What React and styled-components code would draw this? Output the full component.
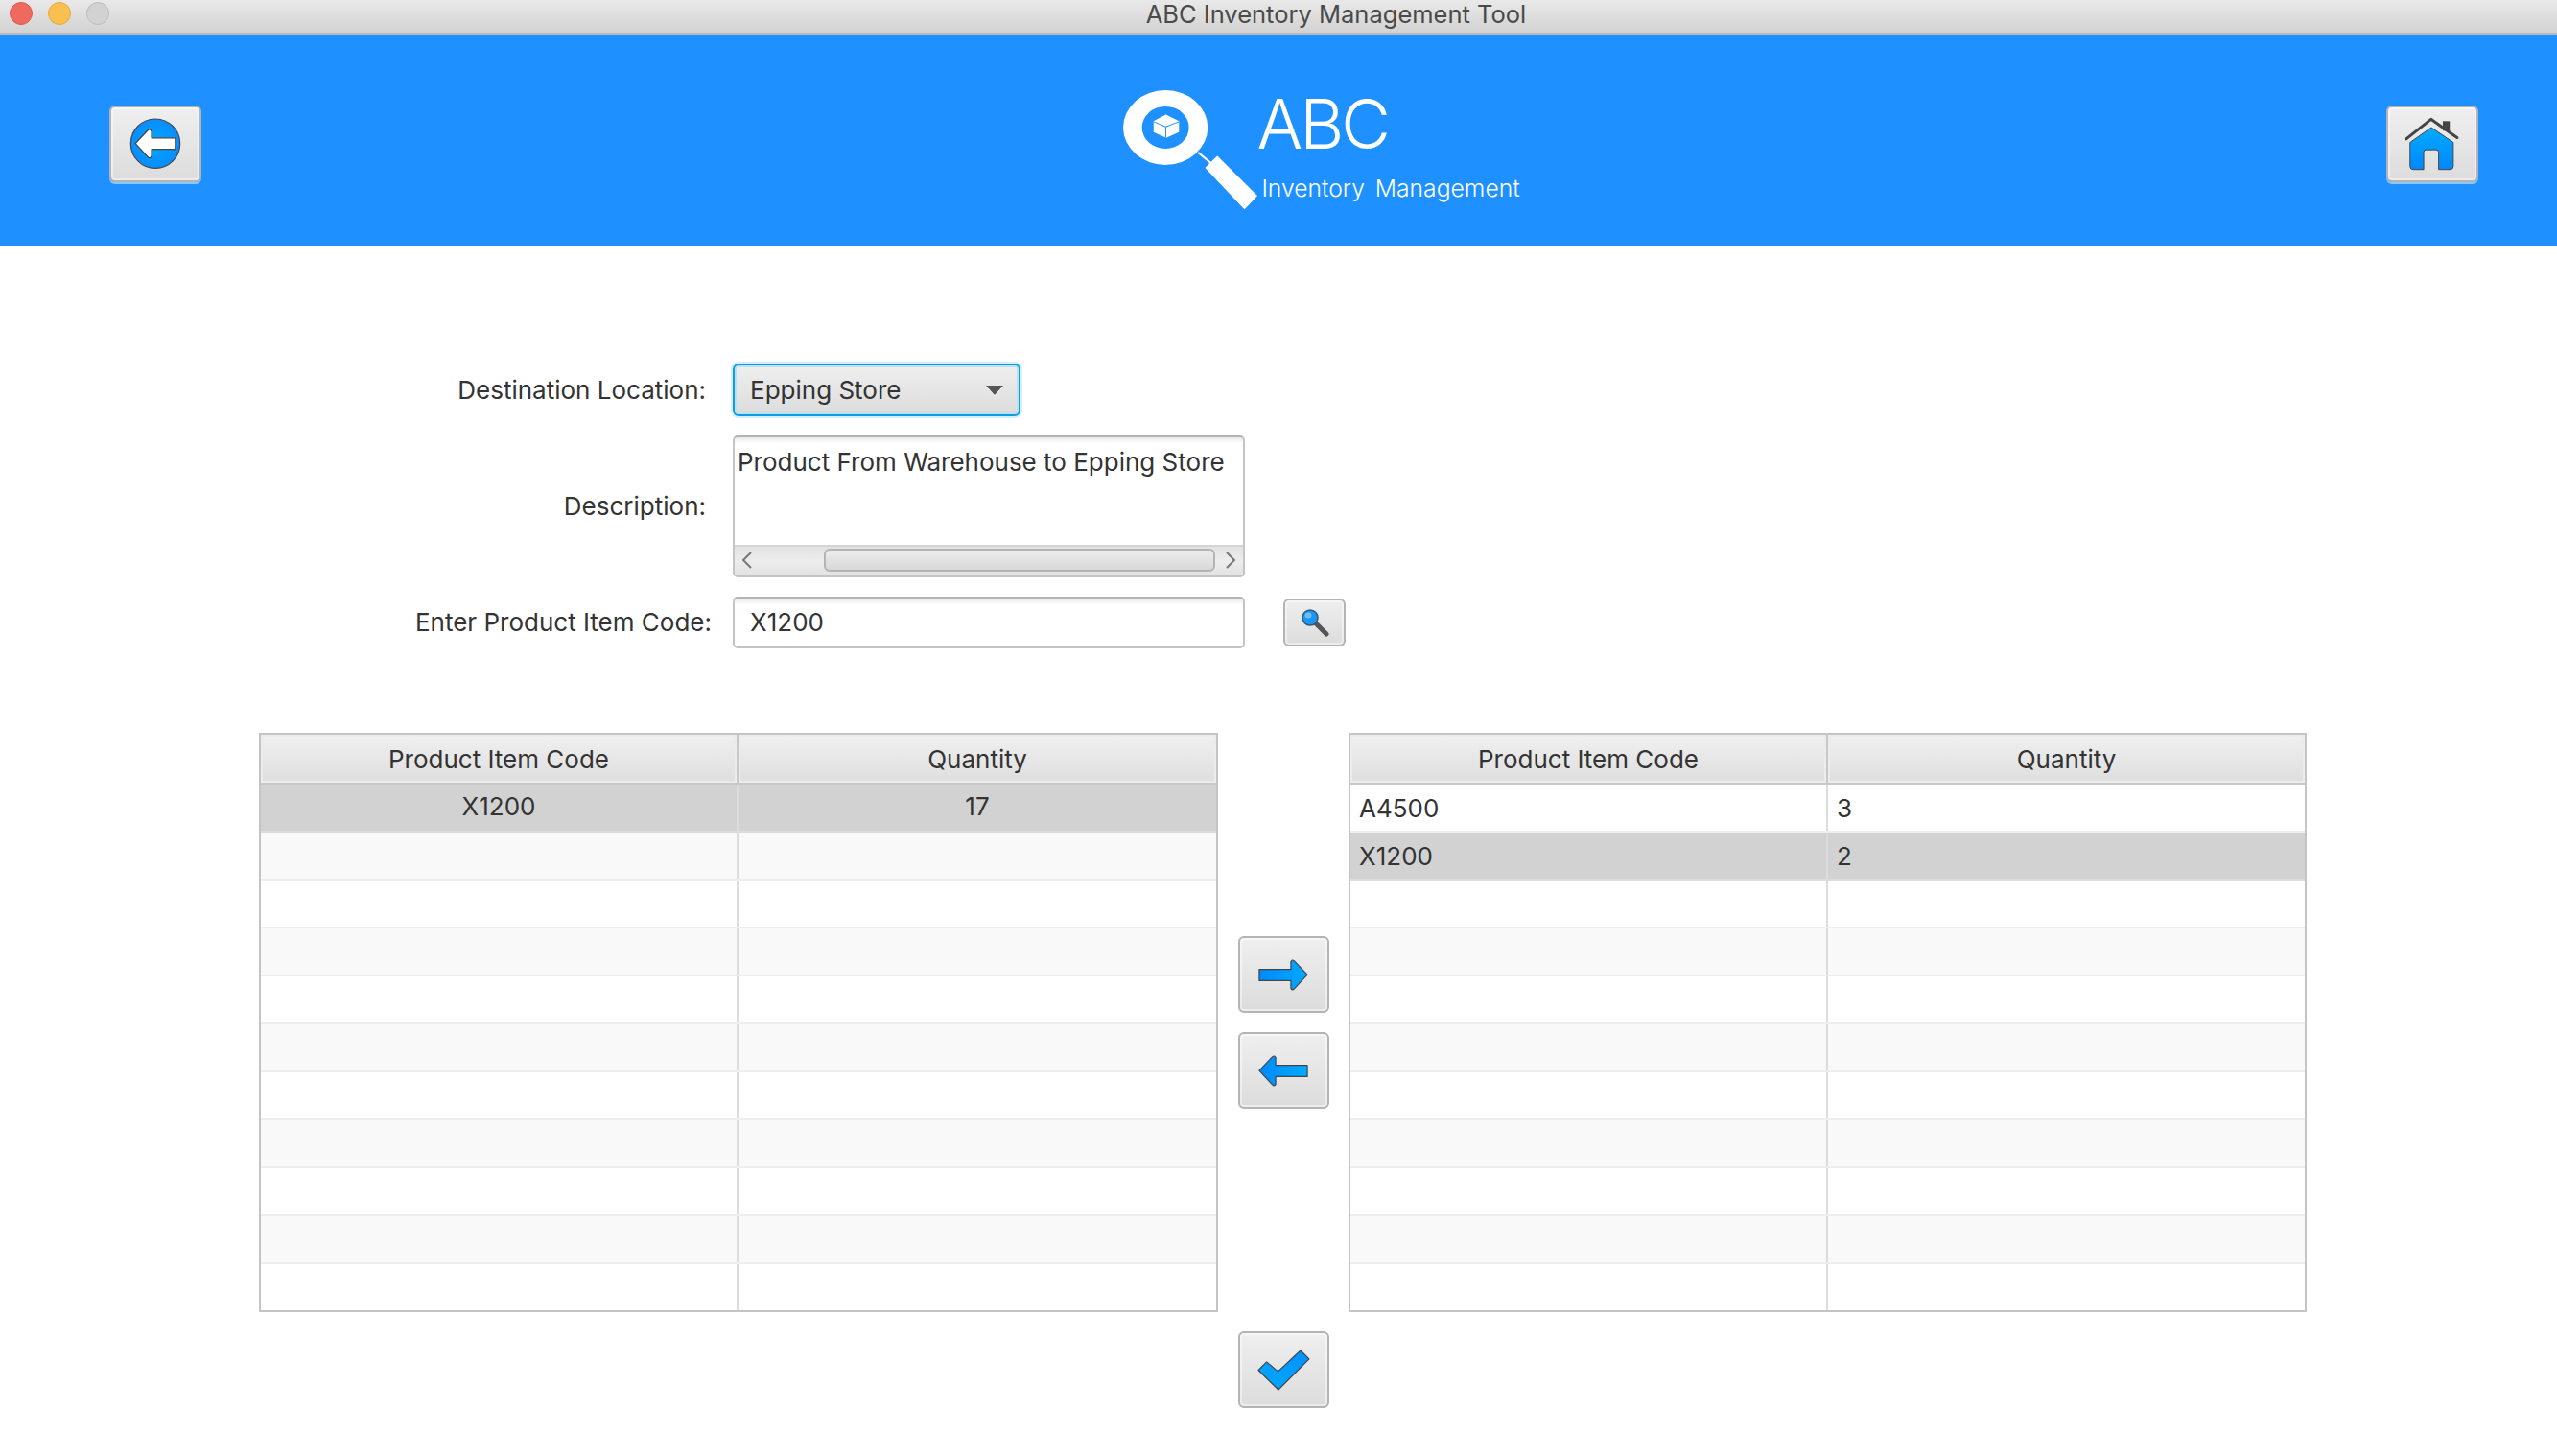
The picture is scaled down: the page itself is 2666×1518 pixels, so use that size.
import React from "react";
import styled, { createGlobalStyle } from "styled-components";

const FONT = `Inter, "Liberation Sans", sans-serif`;

const Global = createGlobalStyle`
  html, body { margin: 0; padding: 0; background: #fff; }
  body { font-family: ${FONT}; color: #333; }
  * { box-sizing: border-box; }
`;

const Page = styled.div`
  width: 2666px;
  height: 1518px;
  overflow: hidden;
  display: flex;
  flex-direction: column;
  background: #fff;
`;

const TitleBar = styled.div`
  position: relative;
  height: 36px;
  flex: none;
  display: flex;
  align-items: center;
  justify-content: center;
  padding: 0 0 4px 120px;
  background: linear-gradient(#e9e9e9, #d2d2d2);
  border-bottom: 2px solid #b9b9b9;
  font-size: 25.5px;
  line-height: 30px;
  color: #4a4a4a;
`;

const Lights = styled.div`
  position: absolute;
  left: 10px;
  top: 2px;
  display: flex;
  gap: 16px;
`;

const Light = styled.span`
  width: 24px;
  height: 24px;
  border-radius: 50%;
  background: ${(p) => p.$fill};
  border: 1px solid ${(p) => p.$edge};
`;

const Header = styled.header`
  height: 220px;
  flex: none;
  display: flex;
  justify-content: space-between;
  align-items: flex-start;
  padding: 74px 82px 0 114px;
  background: #1e90ff;
`;

const Button = styled.button`
  width: ${(p) => p.$w || 95}px;
  height: ${(p) => p.$h || 80}px;
  flex: none;
  padding: 0;
  display: flex;
  align-items: center;
  justify-content: center;
  border: 2px solid #b4b4b4;
  border-radius: 6px;
  background: linear-gradient(#efefef, #dcdcdc);
  box-shadow: inset 0 0 0 2px rgba(255, 255, 255, 0.45);
`;

const HeaderButton = styled(Button)`
  width: 96px;
  height: 80px;
  box-shadow: inset 0 0 0 2px rgba(255, 255, 255, 0.45), 0 2px 0 #8cc6ff;
`;

const Logo = styled.div`
  display: flex;
  align-items: flex-start;
  margin-top: -17px;
  margin-left: 57px;
  color: #fff;
`;

const LogoMark = styled.svg`
  width: 142px;
  height: 126px;
  flex: none;
`;

const LogoText = styled.div`
  display: flex;
  flex-direction: column;
`;

const LogoTitle = styled.div`
  font-size: 71px;
  font-weight: 300;
  line-height: 72px;
  letter-spacing: -3px;
  margin-left: -2px;
`;

const LogoSub = styled.div`
  font-size: 24.7px;
  font-weight: 300;
  line-height: 30px;
  margin-left: 3px;
  margin-top: 16px;
  word-spacing: 4px;
  white-space: nowrap;
`;

const Form = styled.section`
  margin-top: 123px;
  padding-left: 400px;
  display: grid;
  grid-template-columns: 341px 534px auto;
  grid-template-rows: 55px 148px 54px;
  column-gap: 23px;
  row-gap: 20px;
  align-items: center;
  justify-content: start;
`;

const Label = styled.label`
  justify-self: end;
  padding-right: ${(p) => p.$inset || 0}px;
  font-size: 26px;
  line-height: 30px;
  white-space: nowrap;
`;

const ShiftedLabel = styled(Label)`
  margin-right: -1px;
`;

const Combo = styled.div`
  width: 300px;
  height: 55px;
  display: flex;
  align-items: center;
  justify-content: space-between;
  padding: 0 16px 1px 16px;
  border: 2px solid #0a9fe0;
  border-radius: 6px;
  background: linear-gradient(#efefef, #dcdcdc);
  box-shadow: 0 0 0 2px #d4eefa, inset 0 0 0 2px #bfe0ee;
  font-size: 26px;
`;

const Caret = styled.span`
  width: 0;
  height: 0;
  margin-top: 1px;
  border-left: 9px solid transparent;
  border-right: 9px solid transparent;
  border-top: 10px solid #555;
  filter: drop-shadow(0 1px 0 #fff);
`;

const TextArea = styled.div`
  height: 148px;
  display: flex;
  flex-direction: column;
  border: 2px solid #c4c4c4;
  border-top-color: #b4b4b4;
  border-radius: 5px;
  background: linear-gradient(#e8e8e8, #fff 6px);
`;

const TextAreaBody = styled.div`
  flex: 1;
  padding: 10px 3px;
  font-size: 26px;
  line-height: 32px;
  white-space: nowrap;
`;

const ScrollBar = styled.div`
  height: 32px;
  display: flex;
  align-items: center;
  padding: 0 0 2px 7px;
  background: linear-gradient(#e2e2e2, #ededed 50%, #e2e2e2);
  border-top: 2px solid #d4d4d4;
`;

const Thumb = styled.div`
  width: 408px;
  height: 24px;
  margin: 0 10px 0 74px;
  border: 2px solid #b4b4b4;
  border-radius: 6px;
  background: linear-gradient(#ededed, #d8d8d8);
`;

const ScrollArrow = styled.svg`
  width: 12px;
  height: 18px;
  flex: none;
`;

const Input = styled.div`
  height: 54px;
  display: flex;
  align-items: center;
  padding: 0 0 1px 16px;
  border: 2px solid #c4c4c4;
  border-top-color: #b4b4b4;
  border-radius: 5px;
  background: linear-gradient(#e8e8e8, #fff 6px);
  font-size: 26px;
`;

const SearchButton = styled(Button)`
  margin-left: 17px;
`;

const Tables = styled.section`
  margin-top: 88px;
  padding-left: 270px;
  display: flex;
  align-items: stretch;
`;

const Table = styled.div`
  width: ${(p) => p.$w}px;
  height: 604px;
  flex: none;
  border: 2px solid #c4c4c4;
  background: #fff;
  overflow: hidden;
`;

const HeadRow = styled.div`
  height: 52px;
  display: grid;
  grid-template-columns: 496px 1fr;
  border-bottom: 2px solid #c8c8c8;
`;

const HeadCell = styled.div`
  display: flex;
  align-items: center;
  justify-content: center;
  background: linear-gradient(#f0f0f0, #dedede);
  box-shadow: inset 0 0 0 2px #ececec;
  font-size: 26px;
  & + & {
    border-left: 2px solid #c8c8c8;
  }
`;

const Row = styled.div`
  height: 50px;
  display: grid;
  grid-template-columns: 496px 1fr;
  border-bottom: 2px solid ${(p) => (p.$selected ? "#dcdcdc" : "#eeeeee")};
  background: ${(p) => (p.$selected ? "#d2d2d2" : p.$alt ? "#f9f9f9" : "#fff")};
`;

const Cell = styled.div`
  display: flex;
  align-items: center;
  justify-content: ${(p) => (p.$center ? "center" : "flex-start")};
  padding-left: ${(p) => (p.$center ? 0 : 9)}px;
  padding-bottom: ${(p) => (p.$center ? 3 : 0)}px;
  font-size: 26px;
  & + & {
    border-left: 2px solid ${(p) => (p.$selected ? "#dcdcdc" : "#eeeeee")};
  }
`;

const Transfer = styled.div`
  width: 136px;
  flex: none;
  display: flex;
  flex-direction: column;
  align-items: center;
  justify-content: center;
  gap: 20px;
`;

const Footer = styled.div`
  margin-top: 20px;
  padding-left: 1291px;
`;

const Stops = () => (
  <svg width="0" height="0" style={{ position: "absolute" }}>
    <defs>
      <linearGradient id="blueH" x1="0" x2="1" y1="0" y2="0">
        <stop offset="0" stopColor="#0089ff" />
        <stop offset="1" stopColor="#00aaff" />
      </linearGradient>
      <linearGradient id="blueV" x1="0" x2="0" y1="0" y2="1">
        <stop offset="0" stopColor="#00aaff" />
        <stop offset="1" stopColor="#0088ff" />
      </linearGradient>
      <linearGradient id="blueD" x1="0" x2="1" y1="1" y2="0">
        <stop offset="0" stopColor="#00aaff" />
        <stop offset="1" stopColor="#0090ff" />
      </linearGradient>
      <radialGradient id="blueR">
        <stop offset="0" stopColor="#00a8ff" />
        <stop offset="1" stopColor="#0a8cff" />
      </radialGradient>
    </defs>
  </svg>
);

const BackIcon = () => (
  <svg width="56" height="56" viewBox="400 365 172 172">
    <circle cx="486" cy="450" r="79" fill="url(#blueR)" stroke="#444" strokeWidth="3.5" />
    <path
      d="M422 450 L464 405 Q472 402 474 412 L474 432 L550 432 L550 468 L474 468 L474 488 Q472 498 464 495 Z"
      fill="#fff"
      stroke="#444"
      strokeWidth="4"
      strokeLinejoin="round"
    />
  </svg>
);

const HomeIcon = () => (
  <svg width="60" height="57" viewBox="320 185 180 172">
    <rect x="443" y="198" width="22" height="30" fill="#444" />
    <path
      d="M328 254 L406 192 L488 250"
      fill="none"
      stroke="#444"
      strokeWidth="9"
      strokeLinecap="round"
      strokeLinejoin="round"
    />
    <path
      d="M340 265 L407 218 L476 265 L476 340 Q476 350 466 350 L430 350 L430 296 Q430 288 422 288 L391 288 Q383 288 383 296 L383 350 L350 350 Q340 350 340 340 Z"
      fill="url(#blueV)"
      stroke="#444"
      strokeWidth="3"
      strokeLinejoin="round"
    />
  </svg>
);

const RightIcon = () => (
  <svg width="56" height="35" viewBox="180 145 168 106">
    <path
      d="M188 180 L288 180 L288 156 Q292 148 298 153 L340 197 L298 242 Q292 248 288 240 L288 216 L188 216 Z"
      fill="url(#blueH)"
      stroke="#444"
      strokeWidth="3.5"
      strokeLinejoin="round"
    />
  </svg>
);

const LeftIcon = () => (
  <svg width="56" height="35" viewBox="180 445 168 106">
    <path
      d="M340 480 L240 480 L240 456 Q236 448 230 453 L188 497 L230 542 Q236 548 240 540 L240 516 L340 516 Z"
      fill="url(#blueH)"
      stroke="#444"
      strokeWidth="3.5"
      strokeLinejoin="round"
    />
  </svg>
);

const CheckIcon = () => (
  <svg width="57" height="45" viewBox="178 196 172 136">
    <path
      d="M184 264 L210 238 L246 268 L317 202 L344 229 L247 326 Z"
      fill="url(#blueD)"
      stroke="#444"
      strokeWidth="3.5"
      strokeLinejoin="round"
    />
  </svg>
);

const SearchIcon = () => (
  <svg width="30" height="30" viewBox="0 0 30 30">
    <path d="M15 15 L27 27" stroke="#555" strokeWidth="5" strokeLinecap="round" />
    <circle cx="10" cy="10" r="8" fill="#1a96f5" stroke="#33587a" strokeWidth="1.5" />
    <ellipse cx="8" cy="7.5" rx="3.5" ry="3" fill="#6fbdf8" />
  </svg>
);

const LogoIcon = () => (
  <LogoMark viewBox="200 280 412 372" preserveAspectRatio="none">
    <path
      fillRule="evenodd"
      fill="#fff"
      d="M203 398 a128 115 0 1 0 256 0 a128 115 0 1 0 -256 0 Z M260 398 a71 65 0 1 1 142 0 a71 65 0 1 1 -142 0 Z"
    />
    <path d="M430 475 L468 507" stroke="#fff" strokeWidth="6" />
    <path
      d="M453 522 L488 487 L607 608 L570 648 Z"
      fill="#fff"
      stroke="#fff"
      strokeWidth="3"
      strokeLinejoin="round"
    />
    <path d="M332 358 L372 378 L372 412 L333 430 L295 412 L295 378 Z" fill="#fff" />
    <path d="M295 380 L332 396 L372 380 M332 396 L332 430" fill="none" stroke="#1e90ff" strokeWidth="3" />
  </LogoMark>
);

const ChevronLeft = () => (
  <ScrollArrow viewBox="0 0 12 18">
    <path d="M10 1 L2 9 L10 17" fill="none" stroke="#777" strokeWidth="2" />
  </ScrollArrow>
);

const ChevronRight = () => (
  <ScrollArrow viewBox="0 0 12 18">
    <path d="M2 1 L10 9 L2 17" fill="none" stroke="#777" strokeWidth="2" />
  </ScrollArrow>
);

const ROWS = 11;

function DataTable({ width, rows, selected, center }) {
  const list = Array.from({ length: ROWS }, (_, i) => rows[i] || ["", ""]);
  return (
    <Table $w={width}>
      <HeadRow>
        <HeadCell>Product Item Code</HeadCell>
        <HeadCell>Quantity</HeadCell>
      </HeadRow>
      {list.map((r, i) => (
        <Row key={i} $selected={i === selected} $alt={i % 2 === 1}>
          <Cell $center={center} $selected={i === selected}>{r[0]}</Cell>
          <Cell $center={center} $selected={i === selected}>{r[1]}</Cell>
        </Row>
      ))}
    </Table>
  );
}

export default function App() {
  return (
    <Page>
      <Global />
      <Stops />
      <TitleBar>
        <Lights>
          <Light $fill="#f0695f" $edge="#dc5a50" />
          <Light $fill="#f9c04f" $edge="#e3a93e" />
          <Light $fill="#d2d2d2" $edge="#bcbcbc" />
        </Lights>
        ABC Inventory Management Tool
      </TitleBar>
      <Header>
        <HeaderButton><BackIcon /></HeaderButton>
        <Logo>
          <LogoIcon />
          <LogoText>
            <LogoTitle>ABC</LogoTitle>
            <LogoSub>Inventory Management</LogoSub>
          </LogoText>
        </Logo>
        <HeaderButton><HomeIcon /></HeaderButton>
      </Header>
      <Form>
        <Label $inset={5}>Destination Location:</Label>
        <Combo>
          Epping Store
          <Caret />
        </Combo>
        <span />
        <Label $inset={5}>Description:</Label>
        <TextArea>
          <TextAreaBody>Product From Warehouse to Epping Store</TextAreaBody>
          <ScrollBar>
            <ChevronLeft />
            <Thumb />
            <ChevronRight />
          </ScrollBar>
        </TextArea>
        <span />
        <ShiftedLabel>Enter Product Item Code:</ShiftedLabel>
        <Input>X1200</Input>
        <SearchButton $w={65} $h={50}><SearchIcon /></SearchButton>
      </Form>
      <Tables>
        <DataTable width={1000} rows={[["X1200", "17"]]} selected={0} center />
        <Transfer>
          <Button><RightIcon /></Button>
          <Button><LeftIcon /></Button>
        </Transfer>
        <DataTable width={999} rows={[["A4500", "3"], ["X1200", "2"]]} selected={1} />
      </Tables>
      <Footer>
        <Button><CheckIcon /></Button>
      </Footer>
    </Page>
  );
}
